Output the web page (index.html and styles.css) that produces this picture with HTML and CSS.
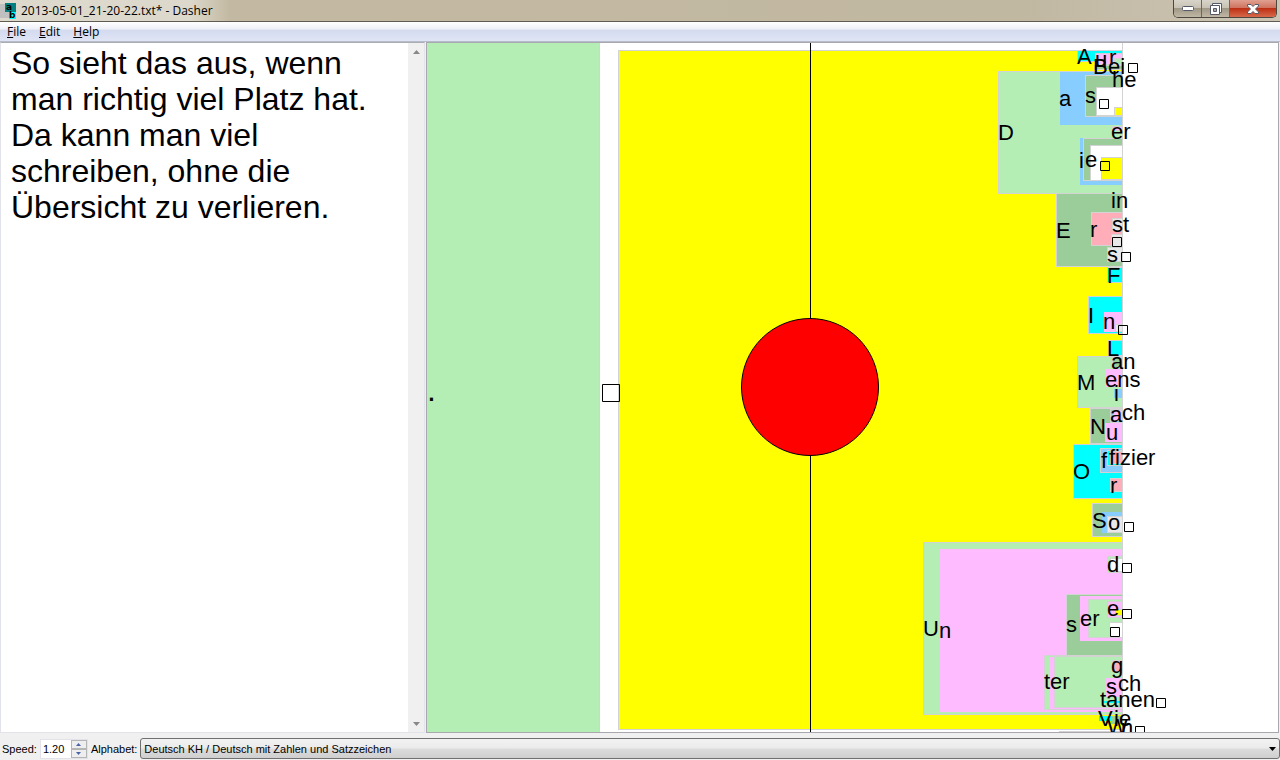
FILE: index.html
```
<!DOCTYPE html>
<html lang="de">

<head>
    <meta charset="UTF-8">
    <meta name="viewport" content="width=device-width, initial-scale=1.0">
    <title>2013-05-01_21-20-22.txt* - Dasher</title>
    <link rel="stylesheet" href="styles.css">
</head>

<body>

    <!-- Title bar -->
    <header class="titlebar">
        <svg class="app-icon" width="16" height="16" viewBox="0 0 16 16" aria-hidden="true">
            <rect y="1" width="9" height="14" fill="#c0c0c0"/>
            <rect x="5" width="11" height="9" fill="#008080"/>
            <rect x="9" y="9" width="7" height="7" fill="#00ffff"/>
            <text x="6" y="7">a</text>
            <text x="9" y="15">b</text>
        </svg>
        <h1 class="title">2013-05-01_21-20-22.txt* - Dasher</h1>
        <div class="window-buttons">
            <button class="win-btn" aria-label="Minimize">
                <svg width="12" height="6" viewBox="0 0 12 6"><rect x=".5" y=".5" width="11" height="4" rx="1" fill="#fff" stroke="#555a68"/></svg>
            </button>
            <button class="win-btn" aria-label="Restore">
                <svg width="12" height="12" viewBox="0 0 12 12" fill="#fff" stroke="#555a68"><path d="M2.5.5h9v9h-9z"/><path d="M.5 2.5h9v9h-9z"/><path d="M3.5 5.5h3v3h-3z" fill="#aaa"/></svg>
            </button>
            <button class="win-btn close" aria-label="Close">
                <svg width="12" height="10" viewBox="0 0 12 10"><path d="M.5.5H4l2 2 2-2h3.500V2l-3 3 3 3v1.500H8l-2-2-2 2H.5V8l3-3-3-3z" fill="#fff" stroke="#555a68"/></svg>
            </button>
        </div>
    </header>

    <!-- Menu -->
    <nav class="menubar">
        <button class="menu"><u>F</u>ile</button>
        <button class="menu"><u>E</u>dit</button>
        <button class="menu"><u>H</u>elp</button>
    </nav>

    <main class="panes">
        <div class="editor">
            <textarea class="text" aria-label="Text" spellcheck="false">So sieht das aus, wenn man richtig viel Platz hat. Da kann man viel schreiben, ohne die Übersicht zu verlieren.</textarea>
            <div class="scrollbar">
                <button class="scroll-btn" aria-label="Scroll up"><svg width="7" height="4" viewBox="0 0 7 4"><path d="M0 4l3.5-4L7 4z"/></svg></button>
                <button class="scroll-btn" aria-label="Scroll down"><svg width="7" height="4" viewBox="0 0 7 4"><path d="M0 0l3.5 4L7 0z"/></svg></button>
            </div>
        </div>

        <!-- Dasher canvas -->
        <div class="canvas">
            <svg class="dasher" viewBox="427 43 851 689" preserveAspectRatio="xMinYMid meet">
                <rect class="green flat" x="427" y="43" width="172" height="689"/>
                <path class="edge" d="M599.5 43v689"/>
                <rect class="yellow" x="618.5" y="50.5" width="504" height="679"/>

                <rect class="cyan" x="1077.5" y="50.5" width="45" height="11"/>
                <rect class="pink" x="1095.5" y="53.5" width="27" height="11"/>
                <rect class="green" x="1114.5" y="58.5" width="8" height="6"/>
                <rect class="dark" x="1094.5" y="65.5" width="28" height="4"/>

                <rect class="green" x="998.5" y="71.5" width="124" height="122"/>
                <rect class="blue flat" x="1060" y="72" width="62" height="53"/>
                <rect class="dark" x="1085.5" y="75.5" width="37" height="41"/>
                <rect class="white" x="1096.5" y="87.5" width="26" height="28"/>
                <rect class="yellow" x="1114.5" y="107.5" width="8" height="8"/>
                <rect class="blue flat" x="1080" y="138" width="42" height="47"/>
                <rect class="dark" x="1083.5" y="138.5" width="39" height="42"/>
                <rect class="white" x="1090.5" y="145.5" width="32" height="35"/>
                <rect class="yellow" x="1101.5" y="157.5" width="21" height="22"/>
                <rect class="pink" x="1112.5" y="126.5" width="10" height="4"/>

                <rect class="dark" x="1056.5" y="193.5" width="66" height="73"/>
                <rect class="red" x="1091.5" y="212.5" width="31" height="33"/>
                <rect class="pale" x="1112.5" y="218.5" width="10" height="12"/>
                <rect class="pale" x="1111.5" y="234.5" width="11" height="12"/>
                <rect class="pale" x="1107.5" y="247.5" width="15" height="14"/>

                <rect class="cyan" x="1107.5" y="267.5" width="15" height="15"/>
                <rect class="cyan" x="1088.5" y="296.5" width="34" height="37"/>
                <rect class="pink flat" x="1104" y="312" width="18" height="20"/>
                <rect class="pale" x="1115.5" y="324.5" width="7" height="7"/>
                <rect class="cyan" x="1108.5" y="340.5" width="14" height="15"/>

                <rect class="green" x="1077.5" y="356.5" width="45" height="51"/>
                <rect class="dark" x="1112.5" y="357.5" width="10" height="10"/>
                <rect class="pink flat" x="1105" y="369" width="17" height="18"/>
                <rect class="blue flat" x="1114" y="389" width="8" height="9"/>
                <rect class="dark" x="1090.5" y="408.5" width="32" height="35"/>
                <rect class="blue" x="1110.5" y="409.5" width="12" height="13"/>
                <rect class="pink" x="1113.5" y="410.5" width="9" height="10"/>
                <rect class="pink flat" x="1105" y="423" width="17" height="19"/>

                <rect class="cyan" x="1073.5" y="444.5" width="49" height="54"/>
                <rect class="blue" x="1100.5" y="448.5" width="22" height="24"/>
                <rect class="cyan" x="1107.5" y="450.5" width="15" height="15"/>
                <rect class="red" x="1110.5" y="451.5" width="12" height="12"/>
                <rect class="red" x="1110.5" y="478.5" width="12" height="13"/>
                <rect class="dark" x="1092.5" y="503.5" width="30" height="33"/>
                <rect class="blue flat" x="1102" y="512" width="20" height="21"/>
                <rect class="pale" x="1107.5" y="516.5" width="15" height="16"/>

                <rect class="green" x="923.5" y="542.5" width="199" height="172"/>
                <rect class="pink flat" x="940" y="549" width="182" height="163"/>
                <rect class="green" x="1107.5" y="556.5" width="15" height="16"/>
                <rect class="white" x="1110.5" y="558.5" width="12" height="13"/>
                <rect class="dark" x="1066.5" y="594.5" width="56" height="61"/>
                <rect class="pink flat" x="1080" y="596" width="42" height="45"/>
                <rect class="green" x="1088.5" y="599.5" width="34" height="38"/>
                <rect class="pink" x="1107.5" y="601.5" width="15" height="16"/>
                <rect class="yellow" x="1115.5" y="609.5" width="7" height="6"/>
                <rect class="white" x="1109.5" y="622.5" width="13" height="15"/>
                <rect class="green" x="1044.5" y="655.5" width="78" height="54"/>
                <rect class="pink flat" x="1050" y="657" width="72" height="52"/>
                <rect class="green" x="1054.5" y="656.5" width="68" height="51"/>
                <rect class="red" x="1112.5" y="660.5" width="10" height="11"/>
                <rect class="pink flat" x="1106" y="678" width="16" height="19"/>
                <rect class="cyan flat" x="1104" y="701" width="18" height="2"/>
                <rect class="cyan flat" x="1099" y="716" width="23" height="5"/>
                <rect class="dark flat" x="1111" y="716" width="11" height="8"/>
                <path class="edge" d="M1059 731.5h63M1122.5 43v689"/>

                <!-- letters -->
                <g class="letters">
                    <text x="1077" y="64">A</text><text x="1095" y="67">u</text><text x="1109" y="65">r</text>
                    <text x="1093" y="74">B</text><text x="1108" y="74">ei</text>
                    <text x="1112" y="87">he</text>
                    <text x="998" y="140">D</text><text x="1059" y="106">a</text><text x="1085" y="103">s</text>
                    <text x="1111" y="139">er</text><text x="1079" y="168">i</text><text x="1085" y="167">e</text>
                    <text x="1111" y="208">in</text><text x="1056" y="238">E</text><text x="1090" y="237">r</text>
                    <text x="1112" y="232">st</text><text x="1107" y="262">s</text>
                    <text x="1107" y="283">F</text><text x="1088" y="323">I</text><text x="1103" y="329">n</text>
                    <text x="1107" y="356">L</text><text x="1111" y="369">an</text><text x="1077" y="390">M</text>
                    <text x="1105" y="387">ens</text><text x="1114" y="401">i</text>
                    <text x="1090" y="434">N</text><text x="1110" y="422">a</text><text x="1122" y="420">ch</text>
                    <text x="1106" y="440">u</text><text x="1073" y="479">O</text><text x="1101" y="468">f</text>
                    <text x="1109" y="465">fizier</text><text x="1110" y="493">r</text>
                    <text x="1092" y="528">S</text><text x="1108" y="530">o</text>
                    <text x="923" y="636">U</text><text x="939" y="638">n</text><text x="1107" y="572">d</text>
                    <text x="1066" y="632">s</text><text x="1080" y="626">er</text><text x="1107" y="616">e</text>
                    <text x="1044" y="689">ter</text><text x="1111" y="673">g</text>
                    <text x="1106" y="694">s</text><text x="1118" y="691">ch</text>
                    <text x="1100" y="707">tanen</text>
                    <text x="1098" y="726">V</text><text x="1114" y="726">ie</text>
                    <text x="1107" y="734">W</text><text x="1121" y="735">n</text>
                    <text class="big" x="427" y="401">.</text>
                </g>

                <!-- space symbols -->
                <g class="spaces">
                    <path d="M602.5 384.5h17v17h-17z"/>
                    <path d="M1128.5 63.5h9v9h-9zM1099.5 99.5h9v9h-9zM1100.5 161.5h9v9h-9zM1112.5 237.5h9v9h-9zM1121.5 252.5h9v9h-9z"/>
                    <path d="M1118.5 325.5h9v9h-9zM1124.5 522.5h9v9h-9zM1122.5 563.5h9v9h-9zM1122.5 609.5h9v9h-9zM1110.5 627.5h9v9h-9zM1156.5 698.5h9v9h-9zM1135.5 726.5h9v9h-9z"/>
                </g>

                <!-- pointer -->
                <path class="axis" d="M810.5 43v689"/>
                <circle class="ball" cx="810" cy="387" r="68.5"/>
            </svg>
        </div>
    </main>

    <!-- Status bar -->
    <footer class="statusbar">
        <label for="speed">Speed:</label>
        <div class="spinner">
            <input id="speed" type="text" value="1.20">
            <div class="spin-buttons">
                <button aria-label="Faster"><svg width="5" height="3" viewBox="0 0 5 3"><path d="M0 3l2.5-3L5 3z"/></svg></button>
                <button aria-label="Slower"><svg width="5" height="3" viewBox="0 0 5 3"><path d="M0 0l2.5 3L5 0z"/></svg></button>
            </div>
        </div>
        <label for="alphabet">Alphabet:</label>
        <div class="combo">
            <select id="alphabet">
                <option>Deutsch KH / Deutsch mit Zahlen und Satzzeichen</option>
            </select>
            <svg class="combo-arrow" width="7" height="4" viewBox="0 0 7 4" aria-hidden="true"><path d="M0 0h7L3.5 4z"/></svg>
        </div>
    </footer>

</body>

</html>
```
FILE: styles.css
```
* {
    margin: 0;
    padding: 0;
    box-sizing: border-box;
}

body {
    font-family: "Open Sans", sans-serif;
    font-size: 12px;
    color: #000;
    background-color: #f0f0f0;
    display: flex;
    flex-direction: column;
    height: 100vh;
    overflow: hidden;
}

button,
input,
select,
textarea {
    font: inherit;
    color: inherit;
    border: none;
    background: none;
    outline: none;
}

/* Title bar */
.titlebar {
    height: 22px;
    padding-right: 3px;
    display: flex;
    align-items: center;
    gap: 5px;
    background: linear-gradient(to right, #ddd9cc 0, #dcd8cb 190px, #c3b9a2 230px, #c1b8a2 80%, #ccc5b4 100%);
    border-bottom: 1px solid #5f5b53;
}

.app-icon {
    font-family: "DejaVu Sans", sans-serif;
    font-size: 9px;
    font-weight: bold;
}

.title {
    font-size: 12px;
    font-weight: normal;
    flex: 1;
}

.window-buttons {
    display: flex;
    align-self: flex-start;
    height: 18px;
    border: 1px solid #4c4840;
    border-top: none;
    border-radius: 0 0 5px 5px;
    overflow: hidden;
}

.win-btn {
    width: 28px;
    display: flex;
    align-items: center;
    justify-content: center;
    background: linear-gradient(#d8d4ca 0, #c8c2b4 45%, #a09886 50%, #c0b8a4 100%);
    border-right: 1px solid #6b675e;
}

.win-btn.close {
    width: 46px;
    background: linear-gradient(#e0a090 0, #cf7460 45%, #bd3015 50%, #d8694a 100%);
    border-right: none;
}

/* Menu */
.menubar {
    height: 20px;
    display: flex;
    gap: 1px;
    padding-left: 1px;
    background: linear-gradient(#fff 0, #eff1f8 35%, #d5dbef 45%, #dfe5f5 100%);
    border-bottom: 1px solid #b6bccc;
}

.menu {
    padding: 0 6px;
    line-height: 19px;
}

/* Panes */
.panes {
    flex: 1;
    display: flex;
    min-height: 0;
}

.editor {
    flex: 0 0 425px;
    display: flex;
    background-color: #fff;
    border: 1px solid #e2e3ea;
    border-top-color: #abadb3;
}

.text {
    flex: 1;
    padding: 2px 10px;
    font-family: "Liberation Sans", Arial, sans-serif;
    font-size: 32px;
    line-height: 36px;
    resize: none;
    overflow: hidden;
}

.scrollbar {
    width: 16px;
    display: flex;
    flex-direction: column;
    justify-content: space-between;
    background-color: #f0f0f0;
}

.scroll-btn {
    height: 17px;
    display: flex;
    align-items: center;
    justify-content: center;
    fill: #888;
}

.canvas {
    flex: 1;
    min-width: 0;
    margin: 0 1px;
    background-color: #fff;
    border: 1px solid #a8a8ae;
}

.dasher {
    display: block;
    width: 100%;
    height: 100%;
    font-family: "Liberation Sans", Arial, sans-serif;
}

.dasher rect {
    stroke: #d3d3d3;
}

.dasher .flat {
    stroke: none;
}

.dasher .edge {
    stroke: #d3d3d3;
    fill: none;
}

.green { fill: #b4eeb4; }
.dark { fill: #9bcd9b; }
.yellow { fill: #ffff00; }
.cyan { fill: #00ffff; }
.blue { fill: #87ceff; }
.pink { fill: #ffbbff; }
.red { fill: #ffaeb9; }
.white { fill: #fff; }
.pale { fill: #e8e8e8; }

.letters {
    font-size: 22px;
}

.letters .big {
    font-size: 32px;
}

.spaces {
    fill: none;
    stroke: #000;
}

.axis {
    stroke: #000;
}

.ball {
    fill: #ff0000;
    stroke: #000;
}

/* Status bar */
.statusbar {
    height: 27px;
    padding: 4px 0 0 2px;
    display: flex;
    align-items: center;
    gap: 3px;
    font-family: "Liberation Sans", Arial, sans-serif;
    font-size: 11px;
}

.spinner {
    width: 48px;
    height: 20px;
    display: flex;
    background-color: #fff;
    border: 1px solid #e2e3ea;
}

.spinner input {
    flex: 1;
    min-width: 0;
    padding-left: 2px;
}

.spin-buttons {
    width: 16px;
    display: flex;
    flex-direction: column;
}

.spin-buttons button {
    flex: 1;
    display: flex;
    align-items: center;
    justify-content: center;
    background-color: #eee;
    border: 1px solid #b5b5b5;
    fill: #4a63a8;
}

.combo {
    position: relative;
    flex: 1;
}

.combo select {
    appearance: none;
    width: 100%;
    height: 21px;
    padding-left: 3px;
    background: linear-gradient(#f2f2f2 0, #ebebeb 48%, #dcdcdc 52%, #cfcfcf 100%);
    border: 1px solid #707070;
    border-radius: 3px;
}

.combo-arrow {
    position: absolute;
    right: 4px;
    top: 9px;
}
```
